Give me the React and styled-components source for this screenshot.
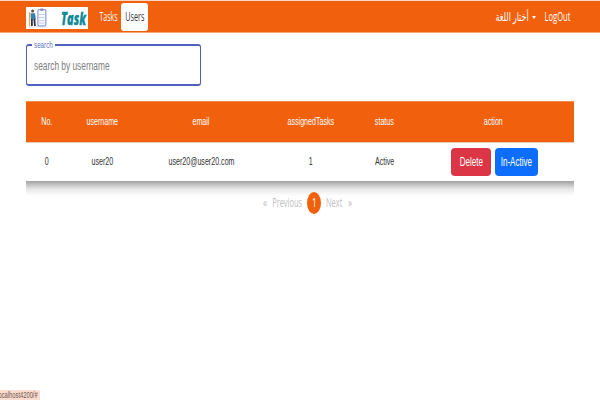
import React from 'react';
import styled, { createGlobalStyle } from 'styled-components';

const GlobalStyle = createGlobalStyle`
  * { box-sizing: border-box; }
  body { margin: 0; background: #fff; overflow: hidden; font-family: "Liberation Sans", Arial, sans-serif; }
`;

const Page = styled.div`
  height: 400px;
  width: 600px;
  display: flex;
  flex-direction: column;
  overflow: hidden;
`;

/* Condensed text: keeps its glyph height and narrows towards $origin. */
const Label = styled.span`
  display: block;
  flex: none;
  white-space: nowrap;
  line-height: 1;
  font-size: ${(p) => p.$size || 10}px;
  transform: scaleX(${(p) => p.$k || 0.71});
  transform-origin: ${(p) => p.$origin || 'center'};
`;

const NavBar = styled.nav`
  flex: none;
  height: 33px;
  padding: 1px 29px 0 26px;
  border-top: 1px solid #fbd9c3;
  border-bottom: 1px solid #f9a878;
  background: #f1600d;
  color: #fff;
  display: flex;
  align-items: center;
  font-family: "Open Sans", "Noto Sans", "DejaVu Sans", sans-serif;
`;

const Logo = styled.svg`
  width: 62px;
  height: 22px;
  margin-top: 2px;
  background: #fff;
`;

const NavItem = styled.a`
  width: ${(p) => p.$w}px;
  height: 28px;
  margin-left: ${(p) => p.$gap || 0}px;
  margin-bottom: 1px;
  border-radius: 3px;
  background: ${(p) => (p.$active ? '#fff' : 'transparent')};
  color: ${(p) => (p.$active ? '#333' : '#fff')};
  display: flex;
  align-items: center;
  justify-content: center;
`;

const NavEnd = styled.div`
  margin-left: auto;
  display: flex;
  align-items: center;
`;

const Caret = styled.span`
  border: 2px solid transparent;
  border-top: 3px solid #fff;
  border-bottom: 0;
  margin-left: 3px;
`;

const Field = styled.fieldset`
  flex: none;
  width: 175px;
  height: 46px;
  margin: 7px 0 0 26px;
  padding: 0 0 0 7px;
  min-width: 0;
  border: 2px solid #5060bb;
  border-left-width: 1px;
  border-right-width: 1px;
  border-radius: 3px;
  color: #808080;
`;

const Legend = styled.legend`
  width: 23px;
  height: 10px;
  margin-left: -2px;
  padding: 1px 0 0 2px;
  color: #6574c4;
`;

const Placeholder = styled.div`
  height: 31px;
  display: flex;
  align-items: center;
`;

const Table = styled.div`
  flex: none;
  width: 548px;
  margin: 15px 0 0 26px;
`;

const Row = styled.div`
  display: grid;
  grid-template-columns: 41px 71px 126px 93px 55px 162px;
  height: ${(p) => (p.$head ? 41 : 39)}px;
  background: ${(p) => (p.$head ? '#f1600d' : '#fff')};
  color: ${(p) => (p.$head ? '#fff' : '#333')};
  border-top: ${(p) => (p.$head ? '1px solid #f58a4e' : '1px solid #eac9b7')};
`;

const Cell = styled.div`
  min-width: 0;
  padding-left: ${(p) => p.$shift || 0}px;
  display: flex;
  align-items: center;
  justify-content: center;
  gap: 4px;
`;

const Shadow = styled.div`
  height: 15px;
  background: linear-gradient(#a0a0a0, #c4c4c4 25%, #e9e9e9 55%, #fff);
`;

const Button = styled.button`
  width: ${(p) => p.$w}px;
  height: 28px;
  padding: 0;
  border: 0;
  border-radius: 4px;
  background: ${(p) => p.$bg};
  color: #fff;
  font-family: inherit;
  display: flex;
  align-items: center;
  justify-content: center;
`;

const Pager = styled.div`
  flex: none;
  height: 22px;
  margin: -4px 0 0 258px;
  display: flex;
  align-items: center;
  color: #c0c0c0;
  font-family: "Open Sans", "Noto Sans", sans-serif;
`;

const PageItem = styled.span`
  width: ${(p) => p.$w}px;
  height: 22px;
  margin-left: ${(p) => p.$gap || 0}px;
  border-radius: 50%;
  background: ${(p) => (p.$current ? '#f1600d' : 'transparent')};
  color: ${(p) => (p.$current ? '#fff' : 'inherit')};
  display: flex;
  align-items: center;
  justify-content: center;
`;

const StatusBar = styled.div`
  width: 40px;
  height: 10px;
  margin-top: auto;
  padding: 1px 2px 0 0;
  border-radius: 0 2px 0 0;
  background: #fbdccf;
  color: #6b5750;
  display: flex;
  justify-content: flex-end;
`;

const columns = ['No.', 'username', 'email', 'assignedTasks', 'status', 'action'];
const user = ['0', 'user20', 'user20@user20.com', '1', 'Active'];

export default function App() {
  return (
    <Page>
      <GlobalStyle />
      <NavBar>
        <Logo viewBox="0 0 62 22">
          <circle cx="6.6" cy="4" r="1.5" fill="#6b4a40" />
          <path d="M4.6 6.3h4.4l.9 6H4.8z" fill="#347eb0" />
          <path d="M5 12h1.8v7H5zM7.4 12h1.9l.5 7H8.1z" fill="#29344f" />
          <path d="M3.5 5v14" stroke="#e6a653" strokeWidth="1.3" />
          <path d="M2.5 20h19" stroke="#d8dceb" strokeWidth="1" />
          <rect x="11.9" y="2.6" width="7.9" height="16.2" rx="1" fill="#f8faff" stroke="#8da4df" strokeWidth="1.3" />
          <rect x="14.2" y="1.4" width="3.2" height="2.4" rx=".8" fill="#9a7d9d" />
          <path d="M13.5 7.5h1M13.5 10.5h1M13.5 13.5h1M13.5 16h1" stroke="#d98a88" />
          <path d="M15.4 7.5h2.8M15.4 10.5h2.8M15.4 13.5h2.8M15.4 16h2.8" stroke="#a9b9e4" strokeWidth=".8" />
          <text x="35" y="18" textLength="25" lengthAdjust="spacingAndGlyphs" fontFamily="Open Sans, sans-serif" fontSize="17" fontWeight="800" fontStyle="italic" fill="#118a9a" stroke="#118a9a" strokeWidth=".3">Task</text>
        </Logo>
        <NavItem $w={24} $gap={9}><Label $size={12} $k={0.58}>Tasks</Label></NavItem>
        <NavItem $w={27} $active><Label $size={12} $k={0.6}>Users</Label></NavItem>
        <NavEnd>
          <NavItem $w={33}><Label $size={12} $k={0.66} dir="rtl">أختار اللغة</Label></NavItem>
          <Caret />
          <NavItem $w={28} $gap={7}><Label $size={12} $k={0.63}>LogOut</Label></NavItem>
        </NavEnd>
      </NavBar>
      <Field>
        <Legend><Label $size={8.7} $k={0.72} $origin="left">search</Label></Legend>
        <Placeholder><Label $size={12} $k={0.695} $origin="left">search by username</Label></Placeholder>
      </Field>
      <Table>
        <Row $head>
          {columns.map((name) => <Cell key={name}><Label>{name}</Label></Cell>)}
        </Row>
        <Row>
          {user.map((value, i) => <Cell key={columns[i]}><Label>{value}</Label></Cell>)}
          <Cell $shift={3}>
            <Button $w={40} $bg="#dc3545"><Label $size={12} $k={0.67}>Delete</Label></Button>
            <Button $w={43} $bg="#0d6efd"><Label $size={12} $k={0.67}>In-Active</Label></Button>
          </Cell>
        </Row>
        <Shadow />
      </Table>
      <Pager>
        <PageItem $w={14}><Label $size={12.5} $k={0.65}>«</Label></PageItem>
        <PageItem $w={31}><Label $size={12} $k={0.62}>Previous</Label></PageItem>
        <PageItem $w={14} $gap={4} $current><Label $size={12} $k={0.68}>1</Label></PageItem>
        <PageItem $w={27}><Label $size={12} $k={0.62}>Next</Label></PageItem>
        <PageItem $w={5}><Label $size={12.5} $k={0.65}>»</Label></PageItem>
      </Pager>
      <StatusBar><Label $size={8.5} $k={0.68} $origin="right">ocalhost4200/#</Label></StatusBar>
    </Page>
  );
}
